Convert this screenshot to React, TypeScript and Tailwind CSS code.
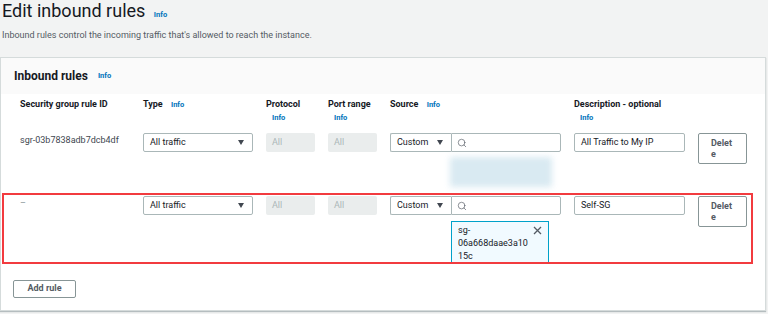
import { Search } from "lucide-react";

const COLS = "grid grid-cols-[110px_110px_49px_49px_171px_111px_49px] gap-x-[13px]";

function Info({ className = "" }: { className?: string }) {
  return <span className={`text-[7.5px] font-bold leading-none text-[#0073bb] ${className}`}>Info</span>;
}

function Head({ label, info, wrap }: { label: string; info?: boolean; wrap?: boolean }) {
  return (
    <div className="text-[9px] font-bold leading-[13px] text-[#16191f]">
      {label}
      {info && wrap && (
        <div className="pl-[6px] leading-[13px]">
          <Info />
        </div>
      )}
      {info && !wrap && (
        <>
          {" "}
          <Info className="ml-[6px]" />
        </>
      )}
    </div>
  );
}

function Caret() {
  return (
    <svg width="6" height="5" viewBox="0 0 6 5">
      <polygon points="0,0 6,0 3,5" fill="#414750" />
    </svg>
  );
}

function TypeSelect() {
  return (
    <div className="flex h-[19px] items-center justify-between rounded-[2px] border border-[#aab7b8] bg-white pl-[6px] pr-[8px] text-[9px] text-[#16191f]">
      <span>All traffic</span>
      <Caret />
    </div>
  );
}

function Disabled() {
  return (
    <div className="flex h-[19px] items-center rounded-[2px] bg-[#eaeded] pl-[6px] text-[9px] text-[#aab7b8]">
      All
    </div>
  );
}

function SourceInputs() {
  return (
    <div className="flex h-[19px]">
      <div className="flex w-[61px] items-center justify-between rounded-l-[2px] border border-r-0 border-[#aab7b8] bg-white pl-[6px] pr-[8px] text-[9px] text-[#16191f]">
        <span>Custom</span>
        <Caret />
      </div>
      <div className="flex w-[110px] items-center rounded-r-[2px] border border-[#aab7b8] bg-white pl-[5px]">
        <Search size={10} strokeWidth={1.6} color="#545b64" />
      </div>
    </div>
  );
}

function Desc({ value }: { value: string }) {
  return (
    <div className="flex h-[19px] items-center rounded-[2px] border border-[#aab7b8] bg-white pl-[6px] text-[9px] text-[#16191f]">
      {value}
    </div>
  );
}

function DeleteButton() {
  return (
    <div className="h-[31px] rounded-[2px] border border-[#879596] bg-white pl-[12px] pt-[4px] text-[9px] font-bold leading-[11px] text-[#545b64]">
      <span className="block">Delet</span>
      <span className="block">e</span>
    </div>
  );
}

export default function App() {
  return (
    <div className="h-[314px] w-[768px] overflow-hidden bg-[#f2f3f3] font-[Roboto,'Liberation_Sans',sans-serif]">
      <div className="pl-[2px]">
        <div className="text-[18px] leading-[22px] text-[#16191f]">
          Edit inbound rules <Info className="ml-[4px]" />
        </div>
        <p className="mt-[7px] text-[9px] leading-[12px] text-[#545b64]">
          Inbound rules control the incoming traffic that's allowed to reach the instance.
        </p>
      </div>

      <div className="mt-[16px] w-[766px] border border-[#d5dbdb] bg-white shadow-[0_1px_1px_rgba(0,28,36,0.25)]">
        <div className="flex h-[36px] items-center bg-[#fafafa] pl-[13px]">
          <span className="text-[12px] font-bold text-[#16191f]">Inbound rules</span>
          <Info className="ml-[10px]" />
        </div>

        <div className={`${COLS} pl-[19px] pt-[4px]`}>
          <Head label="Security group rule ID" />
          <Head label="Type" info />
          <Head label="Protocol" info wrap />
          <Head label="Port range" info wrap />
          <Head label="Source" info />
          <Head label="Description - optional" info wrap />
          <div />
        </div>

        <div className={`${COLS} mt-[9px] items-start pb-[6px] pl-[19px]`}>
          <div className="pt-[1px] text-[9px] leading-[12px] text-[#414750]">sgr-03b7838adb7dcb4df</div>
          <TypeSelect />
          <Disabled />
          <Disabled />
          <div>
            <SourceInputs />
            <div className="ml-[60px] mt-[5px] h-[30px] w-[102px] bg-[#d9eaf2] blur-[3px]" />
          </div>
          <Desc value="All Traffic to My IP" />
          <DeleteButton />
        </div>

        <div className="ml-[1px] w-[751px] border-2 border-[#f23b3f] pl-[16px] pt-[1px]">
          <div className={`${COLS} items-start`}>
            <div className="pt-[1px] text-[9px] leading-[12px] text-[#879596]">–</div>
            <TypeSelect />
            <Disabled />
            <Disabled />
            <div>
              <SourceInputs />
              <div className="ml-[61px] mt-[6px] flex h-[41px] w-[98px] justify-between overflow-hidden border border-b-0 border-[#00a1c9] bg-[#f1faff] pl-[6px] pr-[6px] pt-[2px] text-[9px] leading-[13px] text-[#16191f]">
                <span className="w-[72px] [overflow-wrap:anywhere]">sg-06a668daae3a1015c</span>
                <svg width="9" height="9" viewBox="0 0 9 9" className="mt-[2px]">
                  <path d="M1 1L8 8M8 1L1 8" stroke="#545b64" strokeWidth="1.3" />
                </svg>
              </div>
            </div>
            <Desc value="Self-SG" />
            <DeleteButton />
          </div>
        </div>

        <div className="pb-[12px] pl-[12px] pt-[16px]">
          <div className="flex h-[18px] w-[63px] items-center justify-center rounded-[2px] border border-[#879596] bg-white text-[9px] font-bold text-[#545b64]">
            Add rule
          </div>
        </div>
      </div>
    </div>
  );
}
